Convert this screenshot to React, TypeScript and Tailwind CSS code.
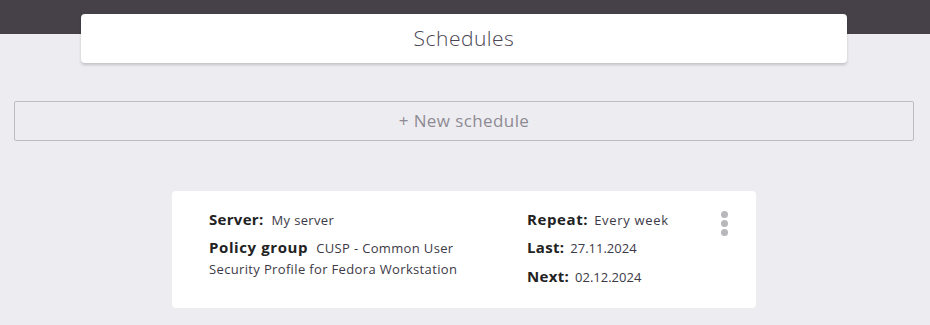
import React from "react";

export default function App() {
  const sans = { fontFamily: "'Open Sans', 'Noto Sans', sans-serif" };
  return (
    <div className="relative w-[930px] h-[325px] bg-[#ededf1] overflow-hidden" style={sans}>
      <div className="h-[34px] bg-[#464149]" />
      <div className="-mt-[20px] px-[81px] w-[930px]">
        <div className="h-[49px] w-[766px] bg-white rounded-[4px] shadow-[0_2px_3px_rgba(0,0,0,0.18)] flex items-center justify-center">
          <span className="text-[21px] text-[#4a4552] tracking-[0.5px] font-light" style={{ fontFamily: "'Open Sans', sans-serif" }}>Schedules</span>
        </div>
      </div>
      <div className="mt-[38px] mx-[14px]">
        <div className="h-[40px] w-[900px] border border-[#bdbcc1] rounded-[2px] flex items-center justify-center text-[17px] tracking-[0.4px] text-[#8d8a93]">
          + New schedule
        </div>
      </div>
      <div className="mt-[50px] ml-[172px] w-[584px] h-[117px] bg-white rounded-[4px] flex pl-[37px] pt-[17px]">
        <div className="w-[318px] text-[13px] tracking-[0.35px] text-[#3d3a47]">
          <div className="flex items-baseline h-[20px]">
            <span className="font-bold text-[15px] tracking-[0.3px] text-[#222]">Server:</span>
            <span className="ml-[8px]">My server</span>
          </div>
          <div className="flex items-baseline h-[20px] mt-[8px]">
            <span className="font-bold text-[15px] tracking-[0.6px] text-[#222]">Policy group</span>
            <span className="ml-[8px]">CUSP - Common User</span>
          </div>
          <div className="mt-[3px] h-[20px] leading-[20px]">Security Profile for Fedora Workstation</div>
        </div>
        <div className="w-[193px] text-[13px] tracking-[0.35px] text-[#3d3a47]">
          <div className="flex items-baseline h-[20px]">
            <span className="font-bold text-[15px] tracking-[0.6px] text-[#222]">Repeat:</span>
            <span className="ml-[6px] tracking-[0.7px]">Every week</span>
          </div>
          <div className="flex items-baseline h-[20px] mt-[8px]">
            <span className="font-bold text-[15px] tracking-[0.3px] text-[#222]">Last:</span>
            <span className="ml-[6px] tracking-[0px]">27.11.2024</span>
          </div>
          <div className="flex items-baseline h-[20px] mt-[9px]">
            <span className="font-bold text-[15px] tracking-[0.3px] text-[#222]">Next:</span>
            <span className="ml-[6px] tracking-[0px]">02.12.2024</span>
          </div>
        </div>
        <div className="flex flex-col gap-[2px] mt-[3px] ml-[1px]">
          <div className="w-[7px] h-[7px] rounded-full bg-[#b8b8bb]" />
          <div className="w-[7px] h-[7px] rounded-full bg-[#b8b8bb]" />
          <div className="w-[7px] h-[7px] rounded-full bg-[#b8b8bb]" />
        </div>
      </div>
    </div>
  );
}
